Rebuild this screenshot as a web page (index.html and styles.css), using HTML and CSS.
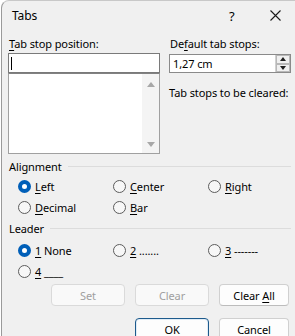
FILE: index.html
```html
<!DOCTYPE html>
<html lang="en">
<head>
    <meta charset="UTF-8">
    <title>Tabs</title>
    <link rel="stylesheet" href="styles.css">
</head>
<body>
    <div class="window">
        <div class="titlebar">
            <span class="title">Tabs</span>
            <span class="help">?</span>
            <span class="close">
                <svg width="11" height="11" viewBox="0 0 11 11"><path d="M0.5 0.5 L10.5 10.5 M10.5 0.5 L0.5 10.5" stroke="#1a1a1a" stroke-width="1.1" fill="none"/></svg>
            </span>
        </div>

        <div class="content">
            <div class="top">
                <div class="col-left">
                    <div class="label"><u>T</u>ab stop position:</div>
                    <div class="textbox"><span class="caret"></span></div>
                    <div class="listbox">
                        <div class="scrollbar">
                            <span class="arrow up"></span>
                            <span class="arrow down"></span>
                        </div>
                    </div>
                </div>
                <div class="col-right">
                    <div class="label">De<u>f</u>ault tab stops:</div>
                    <div class="spin">
                        <span class="spin-value">1,27 cm</span>
                        <div class="spin-btns">
                            <span class="spin-btn"><span class="tri up"></span></span>
                            <span class="spin-btn"><span class="tri down"></span></span>
                        </div>
                    </div>
                    <div class="label clear-label">Tab stops to be cleared:</div>
                </div>
            </div>

            <div class="group">
                <div class="group-title"><span>Alignment</span></div>
                <div class="radios">
                    <div class="radio checked"><span class="dot"></span><u>L</u>eft</div>
                    <div class="radio"><span class="dot"></span><u>C</u>enter</div>
                    <div class="radio"><span class="dot"></span><u>R</u>ight</div>
                    <div class="radio"><span class="dot"></span><u>D</u>ecimal</div>
                    <div class="radio"><span class="dot"></span><u>B</u>ar</div>
                </div>
            </div>

            <div class="group leader">
                <div class="group-title"><span>Leader</span></div>
                <div class="radios">
                    <div class="radio checked"><span class="dot"></span><u>1</u>&nbsp;None</div>
                    <div class="radio"><span class="dot"></span><u>2</u>&nbsp;.......</div>
                    <div class="radio"><span class="dot"></span><u>3</u>&nbsp;-------</div>
                    <div class="radio"><span class="dot"></span><u>4</u>&nbsp;____</div>
                </div>
            </div>

            <div class="buttons">
                <button class="btn" disabled>Set</button>
                <button class="btn" disabled>Clear</button>
                <button class="btn narrow">Clear <u>A</u>ll</button>
            </div>
            <div class="buttons last">
                <button class="btn default">OK</button>
                <button class="btn narrow">Cancel</button>
            </div>
        </div>
    </div>
</body>
</html>
```

FILE: styles.css
```css
* {
    box-sizing: border-box;
}

body {
    margin: 0;
    background: #ffffff;
    font-family: "Noto Sans", "Open Sans", sans-serif;
    font-size: 11px;
    letter-spacing: -0.1px;
    color: #000;
    overflow: hidden;
}

.window {
    margin-left: 1px;
    height: 340px;
    background: #f0f0f0;
    border-left: 1px solid #9a9a9a;
    border-top: 1px solid #c8c8c8;
    border-top-left-radius: 8px;
}

.titlebar {
    height: 29px;
    display: flex;
    align-items: center;
    padding-left: 10px;
}

.title {
    flex: 1;
    font-size: 12px;
}

.help {
    font-size: 13px;
    width: 41px;
}

.close {
    width: 20px;
    display: flex;
    align-items: center;
    margin-right: 5px;
}

.content {
    padding: 6px 4px 0 6px;
}

.top {
    display: grid;
    grid-template-columns: 152px 122px;
    column-gap: 9px;
}

.label {
    height: 16px;
    line-height: 16px;
    padding-left: 1px;
    white-space: nowrap;
}

.label u,
.radio u,
.btn u {
    text-underline-offset: 2px;
}

.textbox {
    margin-top: 1px;
    height: 20px;
    background: #fff;
    border: 1px solid #7a7a7a;
    padding: 3px 2px;
}

.caret {
    display: block;
    width: 1px;
    height: 13px;
    background: #000;
}

.listbox {
    height: 81px;
    background: #fff;
    border: 1px solid #a0a0a0;
    border-top-color: #828282;
    display: flex;
    justify-content: flex-end;
}

.scrollbar {
    width: 17px;
    background: #f4f4f4;
    display: flex;
    flex-direction: column;
    justify-content: space-between;
    align-items: center;
    padding: 8px 0 6px;
}

.arrow {
    width: 0;
    height: 0;
    border-left: 4px solid transparent;
    border-right: 4px solid transparent;
}

.arrow.up {
    border-bottom: 5px solid #a8a8a8;
}

.arrow.down {
    border-top: 5px solid #a8a8a8;
}

.spin {
    margin-top: 2px;
    height: 19px;
    background: #fff;
    border: 1px solid #8a8a8a;
    display: flex;
    align-items: center;
}

.spin-value {
    flex: 1;
    padding-left: 3px;
}

.spin-btns {
    width: 15px;
    height: 100%;
    display: flex;
    flex-direction: column;
    border-left: 1px solid #d0d0d0;
    background: #f0f0f0;
}

.spin-btn {
    flex: 1;
    display: flex;
    align-items: center;
    justify-content: center;
    border: 1px solid #b8b8b8;
}

.tri {
    width: 0;
    height: 0;
    border-left: 3px solid transparent;
    border-right: 3px solid transparent;
}

.tri.up {
    border-bottom: 4px solid #202020;
}

.tri.down {
    border-top: 4px solid #202020;
}

.clear-label {
    margin-top: 12px;
    padding-left: 0;
}

.group {
    margin-top: 4px;
}

.group-title {
    display: flex;
    align-items: center;
    height: 16px;
    padding-left: 1px;
}

.group-title::after {
    content: "";
    flex: 1;
    height: 1px;
    background: #dcdcdc;
    margin-left: 6px;
}

.radios {
    margin-top: 2px;
    display: grid;
    grid-template-columns: 95px 95px 90px;
    row-gap: 1px;
    padding-left: 10px;
}

.leader {
    margin-top: 3px;
}

.leader .radios {
    margin-top: 4px;
}

.radio {
    height: 20px;
    display: flex;
    align-items: center;
}

.dot {
    width: 13px;
    height: 13px;
    border-radius: 50%;
    border: 1px solid #5c5c5c;
    background: #f7f7f7;
    margin-right: 4px;
    flex-shrink: 0;
}

.radio.checked .dot {
    border: 4px solid #005fb8;
    background: #fff;
}

.buttons {
    margin-top: 3px;
    display: flex;
    justify-content: flex-end;
    gap: 10px;
    padding-right: 2px;
}

.buttons.last {
    margin-top: 12px;
}

.btn {
    width: 74px;
    height: 22px;
    font-family: inherit;
    font-size: 11px;
    letter-spacing: -0.1px;
    color: #000;
    background: #fdfdfd;
    border: 1px solid #d0d0d0;
    border-bottom-color: #bcbcbc;
    border-radius: 4px;
    padding: 0;
}

.btn.narrow {
    width: 70px;
}

.btn:disabled {
    color: #a0a0a0;
    background: #f9f9f9;
    border-color: #dadada;
}

.btn.default {
    border: 1px solid #1d5a8c;
    box-shadow: inset 0 0 0 1px #e0ecf6;
}
```
